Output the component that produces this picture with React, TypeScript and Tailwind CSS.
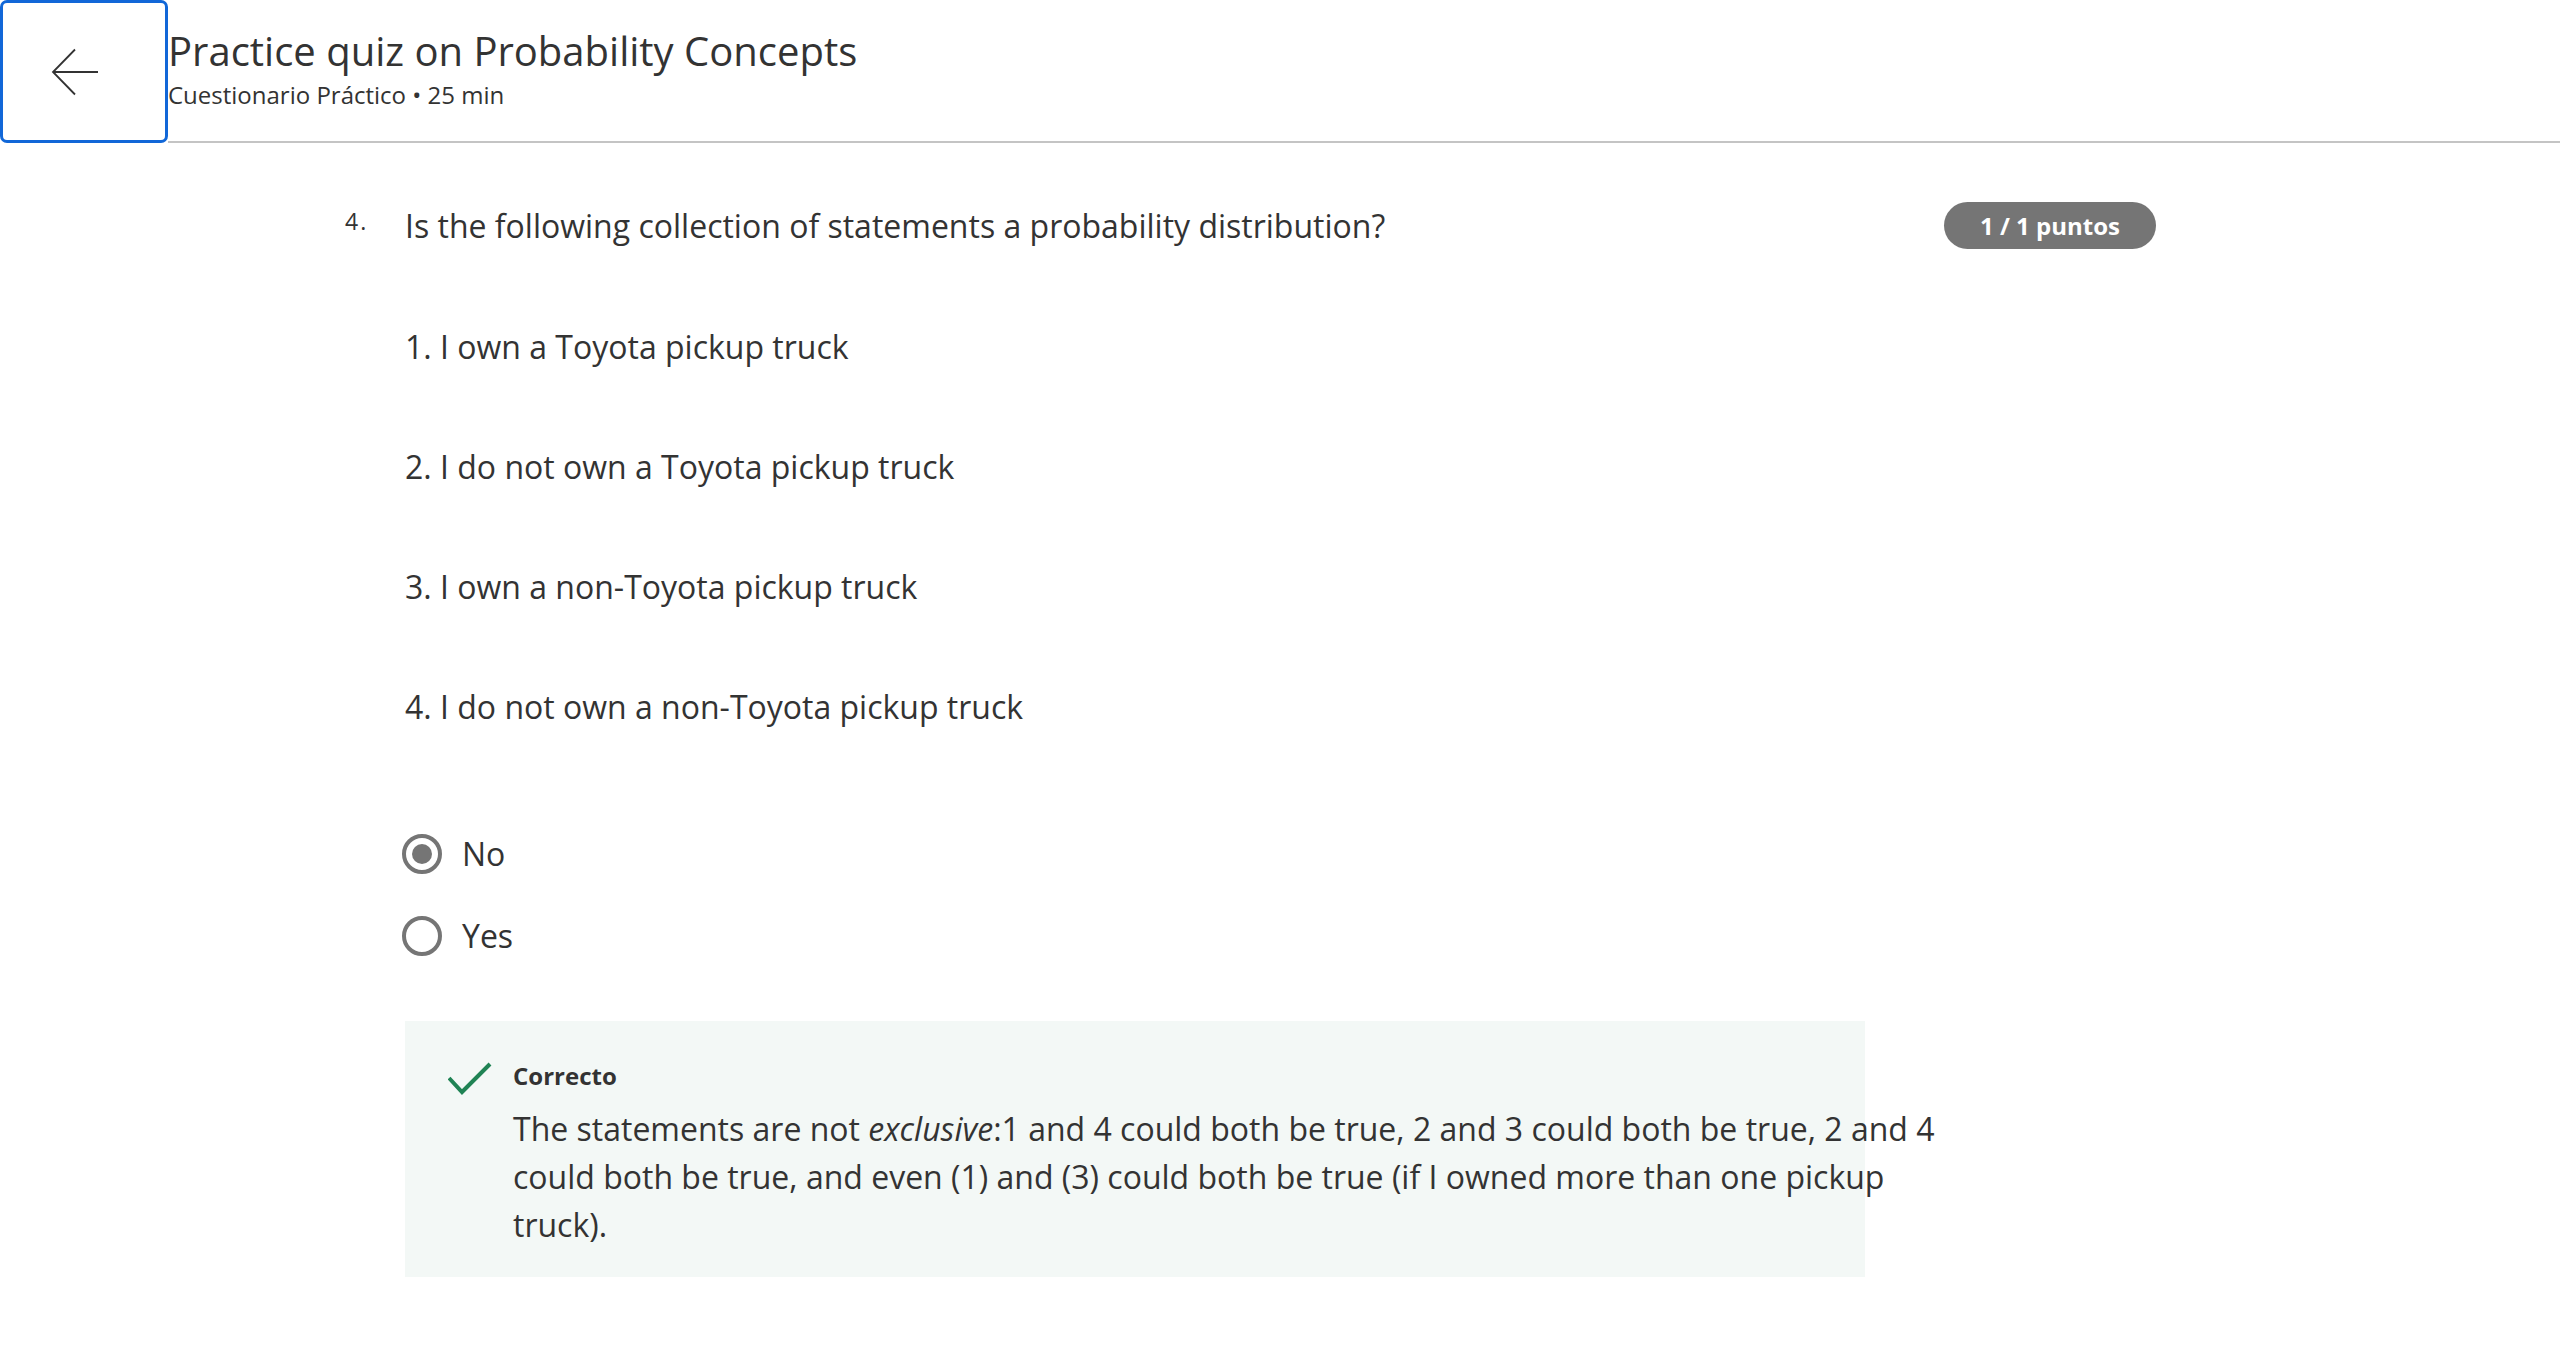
import React from 'react';

const statements = [
    "1. I own a Toyota pickup truck",
    "2. I do not own a Toyota pickup truck",
    "3. I own a non-Toyota pickup truck",
    "4. I do not own a non-Toyota pickup truck",
];

const options = [
    { label: "No", checked: true },
    { label: "Yes", checked: false },
];

const Radio = ({ checked }: { checked: boolean }) => (
    <span className="w-[40px] h-[40px] rounded-full border-[4px] border-[#757575] flex items-center justify-center shrink-0">
        {checked && <span className="w-[20px] h-[20px] rounded-full bg-[#757575]" />}
    </span>
);

export default function App() {
    return (
        <div className="min-h-screen bg-white text-[#333333] font-['Open_Sans',sans-serif]">
            {/* header */}
            <header className="flex h-[143px]">
                <button className="w-[168px] h-full shrink-0 border-[3px] border-[#1167d8] rounded-[7px] flex items-center pl-[48px] bg-white">
                    <svg width="48" height="48" viewBox="0 0 48 48" fill="none" stroke="#333333" strokeWidth="1.8">
                        <path d="M47 24H2" />
                        <path d="M24 1.5L2 24l22 22.5" />
                    </svg>
                </button>
                <div className="flex-1 border-b-2 border-[#c4c4c4] pt-[25px]">
                    <h1 className="text-[40px] leading-[52px] font-normal">Practice quiz on Probability Concepts</h1>
                    <p className="text-[24px] leading-[30px] mt-[3px]">Cuestionario Práctico • 25 min</p>
                </div>
            </header>

            <main className="ml-[345px] w-[1811px] pt-[61px] pb-[80px]">
                <div className="flex items-start">
                    <span className="w-[60px] shrink-0 text-[23px] leading-[28px] tracking-[2px] pt-[3px]">4.</span>
                    <p className="text-[32px] leading-[44px]">Is the following collection of statements a probability distribution?</p>
                    <span className="ml-auto -mt-[2px] w-[212px] h-[47px] rounded-full bg-[#757575] text-white text-[24px] font-bold flex items-center justify-center">
                        1 / 1 puntos
                    </span>
                </div>

                <div className="pl-[60px]">
                    {statements.map((s) => (
                        <p key={s} className="text-[32px] leading-[44px] mt-[76px]">{s}</p>
                    ))}

                    <div className="mt-[97px] -ml-[3px] flex flex-col gap-[26px]">
                        {options.map((o) => (
                            <label key={o.label} className="flex items-center gap-[20px] h-[56px]">
                                <Radio checked={o.checked} />
                                <span className="text-[32px] leading-[44px]">{o.label}</span>
                            </label>
                        ))}
                    </div>

                    <div className="mt-[57px] w-[1460px] h-[256px] bg-[#f3f8f6] flex pt-[39px]">
                        <div className="w-[108px] shrink-0 pl-[43px] pt-[2px]">
                            <svg width="44" height="34" viewBox="0 0 44 34" fill="none" stroke="#1f8354" strokeWidth="4">
                                <path d="M1 16l13 14L42 2" />
                            </svg>
                        </div>
                        <div className="w-[1445px] shrink-0">
                            <p className="text-[24px] leading-[32px] font-bold">Correcto</p>
                            <p className="text-[32px] leading-[48px] mt-[13px]">
                                The statements are not <em>exclusive</em>:1 and 4 could both be true, 2 and 3 could both be true, 2 and 4 could both be true, and even (1) and (3) could both be true (if I owned more than one pickup truck).
                            </p>
                        </div>
                    </div>
                </div>
            </main>
        </div>
    );
}
